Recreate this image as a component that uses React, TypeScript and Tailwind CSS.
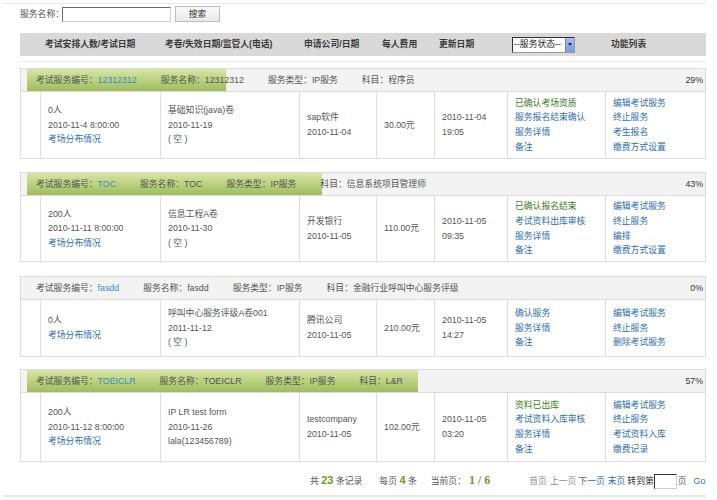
import React from "react";

type L = { t: string; c?: "link" | "green" | "text" };

interface Block {
  id: string;
  name: string;
  type: string;
  subject: string;
  pct: number;
  h: number;
  mt: number;
  c1: L[];
  c2: L[];
  c3: L[];
  fee: string;
  upd: L[];
  status: L[];
  funcs: L[];
}

const tx = (t: string): L => ({ t, c: "text" });
const ln = (t: string): L => ({ t, c: "link" });
const gr = (t: string): L => ({ t, c: "green" });

const blocks: Block[] = [
  {
    id: "12312312",
    name: "12312312",
    type: "IP服务",
    subject: "程序员",
    pct: 29,
    h: 67,
    mt: 6,
    c1: [tx("0人"), tx("2010-11-4 8:00:00"), ln("考场分布情况")],
    c2: [tx("基础知识(java)卷"), tx("2010-11-19"), tx("( 空 )")],
    c3: [tx("sap软件"), tx("2010-11-04")],
    fee: "30.00元",
    upd: [tx("2010-11-04"), tx("19:05")],
    status: [gr("已确认考场资质"), ln("服务报名结束确认"), ln("服务详情"), ln("备注")],
    funcs: [ln("编辑考试服务"), ln("终止服务"), ln("考生报名"), ln("缴费方式设置")],
  },
  {
    id: "TOC",
    name: "TOC",
    type: "IP服务",
    subject: "信息系统项目管理师",
    pct: 43,
    h: 66,
    mt: 13,
    c1: [tx("200人"), tx("2010-11-11 8:00:00"), ln("考场分布情况")],
    c2: [tx("信息工程A卷"), tx("2010-11-30"), tx("( 空 )")],
    c3: [tx("开发银行"), tx("2010-11-05")],
    fee: "110.00元",
    upd: [tx("2010-11-05"), tx("09:35")],
    status: [gr("已确认报名结束"), ln("考试资料出库审核"), ln("服务详情"), ln("备注")],
    funcs: [ln("编辑考试服务"), ln("终止服务"), ln("编排"), ln("缴费方式设置")],
  },
  {
    id: "fasdd",
    name: "fasdd",
    type: "IP服务",
    subject: "金融行业呼叫中心服务评级",
    pct: 0,
    h: 57,
    mt: 14,
    c1: [tx("0人"), ln("考场分布情况")],
    c2: [tx("呼叫中心服务评级A卷001"), tx("2011-11-12"), tx("( 空 )")],
    c3: [tx("腾讯公司"), tx("2010-11-05")],
    fee: "210.00元",
    upd: [tx("2010-11-05"), tx("14:27")],
    status: [ln("确认服务"), ln("服务详情"), ln("备注")],
    funcs: [ln("编辑考试服务"), ln("终止服务"), ln("删除考试服务")],
  },
  {
    id: "TOEICLR",
    name: "TOEICLR",
    type: "IP服务",
    subject: "L&R",
    pct: 57,
    h: 69,
    mt: 12,
    c1: [tx("200人"), tx("2010-11-12 8:00:00"), ln("考场分布情况")],
    c2: [tx("IP LR test form"), tx("2010-11-26"), tx("lala(123456789)")],
    c3: [tx("testcompany"), tx("2010-11-05")],
    fee: "102.00元",
    upd: [tx("2010-11-05"), tx("03:20")],
    status: [gr("资料已出库"), ln("考试资料入库审核"), ln("服务详情"), ln("备注")],
    funcs: [ln("编辑考试服务"), ln("终止服务"), ln("考试资料入库"), ln("缴费记录")],
  },
];

function Lines({ lines }: { lines: L[] }) {
  return (
    <>
      {lines.map((l, i) => (
        <div
          key={i}
          className={
            "whitespace-pre " +
            (l.c === "link"
              ? "text-[#2f6eae]"
              : l.c === "green"
              ? "text-[#3b7c1c]"
              : "text-[#555555]")
          }
        >
          {l.t}
        </div>
      ))}
    </>
  );
}

function Cell({ w, lines, last }: { w: string; lines: L[]; last?: boolean }) {
  return (
    <div
      className={
        w +
        " flex flex-col justify-center pl-[7px] border-l border-[#dddddd] " +
        (last ? "border-r" : "")
      }
    >
      <Lines lines={lines} />
    </div>
  );
}

function BlockView({ b }: { b: Block }) {
  return (
    <div className="ml-[20px] w-[686px]" style={{ marginTop: b.mt }}>
      <div className="relative h-[24px] border border-[#dcdcdc] bg-[#f3f3f3] flex items-center">
        {b.pct > 0 && (
          <div
            className="absolute left-[6px] top-0 bottom-0 bg-[linear-gradient(to_bottom,#d8e5a6,#bbd17f_50%,#a0bc5f)]"
            style={{ width: (b.pct * 686) / 100 }}
          />
        )}
        <div className="relative flex items-center gap-[24px] pl-[15px] text-[#555555] whitespace-nowrap">
          <span>
            考试服务编号：<span className="text-[#3a8cc4]">{b.id}</span>
          </span>
          <span>服务名称：{b.name}</span>
          <span>服务类型：{b.type}</span>
          <span>科目：{b.subject}</span>
        </div>
        <div className="relative ml-auto pr-[2px] text-[#333333]">{b.pct}%</div>
      </div>
      <div className="flex border-b border-[#dddddd]" style={{ height: b.h }}>
        <Cell w="w-[20px]" lines={[]} />
        <Cell w="w-[120px]" lines={b.c1} />
        <Cell w="w-[139px]" lines={b.c2} />
        <Cell w="w-[77px]" lines={b.c3} />
        <Cell w="w-[58px]" lines={[tx(b.fee)]} />
        <Cell w="w-[73px]" lines={b.upd} />
        <Cell w="w-[98px]" lines={b.status} />
        <Cell w="w-[101px]" lines={b.funcs} last />
      </div>
    </div>
  );
}

export default function App() {
  return (
    <div className="w-[717px] h-[500px] bg-white overflow-hidden pt-[3px] text-[8.8px] leading-[14.6px] text-[#555555] font-['Liberation_Sans','Noto_Sans_CJK_SC',sans-serif]">
      <div className="ml-[3px] w-[703px] h-px bg-[#e8e8e8]" />
      {/* search row */}
      <div className="mt-[2px] ml-[20px] flex items-center h-[16px]">
        <span className="text-[#555555] w-[42px] whitespace-nowrap">服务名称：</span>
        <div className="w-[109px] h-[15px] bg-white border border-t-[#6b6b6b] border-l-[#6b6b6b] border-r-[#cfcfcf] border-b-[#cfcfcf]" />
        <div className="ml-[4px] w-[45px] h-[16px] flex items-center justify-center border border-[#bdbdbd] bg-[linear-gradient(to_bottom,#fbfbfb,#e9e9e9)] text-[#333333]">
          搜索
        </div>
      </div>
      {/* header bar */}
      <div className="mt-[11px] ml-[20px] w-[686px] h-[23px] bg-[#d9d9d9] flex items-center font-bold text-[#3a3a3a] whitespace-nowrap">
        <div className="w-[25px]" />
        <div className="w-[120px]">考试安排人数/考试日期</div>
        <div className="w-[139px]">考卷/失效日期/监管人(电话)</div>
        <div className="w-[78px]">申请公司/日期</div>
        <div className="w-[57px]">每人费用</div>
        <div className="w-[73px]">更新日期</div>
        <div className="w-[99px]">
          <div className="w-[63px] h-[16px] bg-white border border-t-[#333333] border-l-[#333333] border-r-[#999999] border-b-[#999999] flex items-center font-normal text-[#222222]">
            <span className="flex-1 pl-[1px] leading-none">--服务状态--</span>
            <div className="w-[9px] h-full bg-[linear-gradient(to_bottom,#a8c0ee,#7b9ad8)] border-l border-[#6b86c0] flex items-center justify-center">
              <div className="w-0 h-0 border-l-[2px] border-r-[2px] border-t-[3px] border-l-transparent border-r-transparent border-t-[#1d2a4a]" />
            </div>
          </div>
        </div>
        <div>功能列表</div>
      </div>
      <div className="mt-[5px] ml-[20px] w-[686px] h-px bg-[#eeeeee]" />
      {blocks.map((b, i) => (
        <BlockView key={i} b={b} />
      ))}
      {/* pagination */}
      <div className="mt-[9px] ml-[310px] h-[20px] flex items-center whitespace-nowrap text-[#555555]">
        <span>
          共 <span className="text-[11px] font-bold text-[#6c9a22]">23</span> 条记录
        </span>
        <span className="ml-[17px]">
          每页 <span className="text-[11px] font-bold text-[#6c9a22]">4</span> 条
        </span>
        <span className="ml-[14px]">
          当前页：
          <span className="ml-[3px] text-[12px] font-bold text-[#6c9a22] font-['Liberation_Serif',serif]">1 / 6</span>
        </span>
        <span className="ml-[39px] text-[#8a8a8a]">首页</span>
        <span className="ml-[3px] text-[#8a8a8a]">上一页</span>
        <span className="ml-[2px] text-[#2f6eae]">下一页</span>
        <span className="ml-[3px] text-[#2f6eae]">末页</span>
        <span className="ml-[2px] text-[#333333]">转到第</span>
        <div className="w-[23px] h-[15px] bg-white border border-t-[#333333] border-l-[#333333] border-r-[#cccccc] border-b-[#cccccc]" />
        <span className="ml-[1px] text-[#555555]">页</span>
        <span className="ml-[7px] text-[#3070c0]">Go</span>
      </div>
      <div className="mt-[4px] ml-[3px] w-[703px] h-[2px] bg-[#e8e8e8]" />
    </div>
  );
}
